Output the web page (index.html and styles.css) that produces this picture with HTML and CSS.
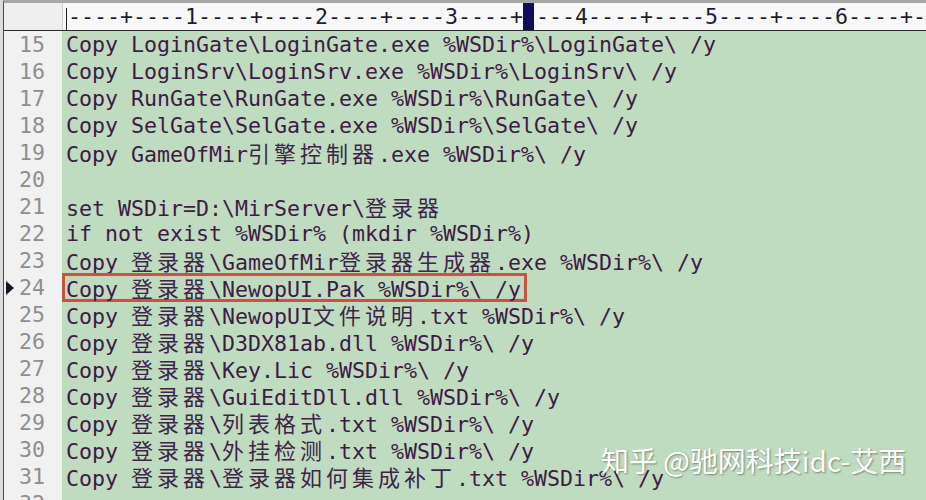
FILE: index.html
```html
<!DOCTYPE html>
<html>
<head>
<meta charset="utf-8">
<link rel="stylesheet" href="styles.css">
</head>
<body>
<div class="window">
  <div class="ruler-row">
    <div class="gutter-head"></div>
    <div class="ruler"><span class="tick"></span>----+----1----+----2----+----3----+<span class="caret">-</span>---4----+----5----+----6----+-</div>
  </div>
  <div class="editor">
    <div class="gutter">
      <div class="ln">15</div><div class="ln">16</div><div class="ln">17</div><div class="ln">18</div>
      <div class="ln">19</div><div class="ln">20</div><div class="ln">21</div><div class="ln">22</div>
      <div class="ln">23</div><div class="ln cur"><span class="mark"></span>24</div><div class="ln">25</div><div class="ln">26</div>
      <div class="ln">27</div><div class="ln">28</div><div class="ln">29</div><div class="ln">30</div>
      <div class="ln">31</div><div class="ln">32</div>
    </div>
    <div class="code">
      <div class="line">Copy LoginGate\LoginGate.exe %WSDir%\LoginGate\ /y</div>
      <div class="line">Copy LoginSrv\LoginSrv.exe %WSDir%\LoginSrv\ /y</div>
      <div class="line">Copy RunGate\RunGate.exe %WSDir%\RunGate\ /y</div>
      <div class="line">Copy SelGate\SelGate.exe %WSDir%\SelGate\ /y</div>
      <div class="line">Copy GameOfMir<span class="cjk">引擎控制器</span>.exe %WSDir%\ /y</div>
      <div class="line"></div>
      <div class="line">set WSDir=D:\MirServer\<span class="cjk">登录器</span></div>
      <div class="line">if not exist %WSDir% (mkdir %WSDir%)</div>
      <div class="line">Copy <span class="cjk">登录器</span>\GameOfMir<span class="cjk">登录器生成器</span>.exe %WSDir%\ /y</div>
      <div class="line"><span class="hl">Copy <span class="cjk">登录器</span>\NewopUI.Pak %WSDir%\ /y</span></div>
      <div class="line">Copy <span class="cjk">登录器</span>\NewopUI<span class="cjk">文件说明</span>.txt %WSDir%\ /y</div>
      <div class="line">Copy <span class="cjk">登录器</span>\D3DX81ab.dll %WSDir%\ /y</div>
      <div class="line">Copy <span class="cjk">登录器</span>\Key.Lic %WSDir%\ /y</div>
      <div class="line">Copy <span class="cjk">登录器</span>\GuiEditDll.dll %WSDir%\ /y</div>
      <div class="line">Copy <span class="cjk">登录器</span>\<span class="cjk">列表格式</span>.txt %WSDir%\ /y</div>
      <div class="line">Copy <span class="cjk">登录器</span>\<span class="cjk">外挂检测</span>.txt %WSDir%\ /y</div>
      <div class="line">Copy <span class="cjk">登录器</span>\<span class="cjk">登录器如何集成补丁</span>.txt %WSDir%\ /y</div>
      <div class="line"></div>
    </div>
  </div>
  <div class="watermark">知乎 @驰网科技idc-艾西</div>
</div>
</body>
</html>
```

FILE: styles.css
```css
html, body {
  margin: 0;
  padding: 0;
  width: 926px;
  height: 500px;
  overflow: hidden;
  background: #dcdcdc;
}

.window {
  position: relative;
  height: 497px;
  margin-left: 3px;
  border-top: 3px solid #a7a7a7;
  border-left: 1px solid #4a4a4a;
  overflow: hidden;
  font-family: "DejaVu Sans Mono", "Liberation Mono", monospace;
  font-size: 21.6px;
}

.ruler-row {
  display: flex;
  height: 27px;
  border-bottom: 1px solid #2a2a2a;
}

.gutter-head {
  width: 58px;
  background: #efefef;
  border-right: 1px solid #d0d0d0;
}

.ruler {
  flex: 1;
  position: relative;
  background: #f8f8f8;
  color: #1c1c2c;
  line-height: 27px;
  padding-left: 5px;
  white-space: pre;
  font-family: "DejaVu Sans Mono", monospace;
}

.tick {
  position: absolute;
  left: 3px;
  top: 5px;
  width: 1px;
  height: 22px;
  background: #222;
}

.caret {
  display: inline-block;
  width: 11px;
  background: #0e0e5c;
  color: #0e0e5c;
  margin-right: 2px;
}

.editor {
  display: flex;
}

.gutter {
  width: 58px;
  background: #f1f1f1;
  color: #8e8e8e;
  flex: none;
}

.ln {
  position: relative;
  height: 27px;
  line-height: 27px;
  text-align: right;
  padding-right: 17px;
}

.mark {
  position: absolute;
  left: 2px;
  top: 7px;
  width: 0;
  height: 0;
  border-top: 7px solid transparent;
  border-bottom: 7px solid transparent;
  border-left: 8px solid #151525;
}

.code {
  flex: 1;
  background: #c0dcc0;
  color: #3e1a45;
  padding-left: 4px;
}

.line {
  height: 27px;
  line-height: 27px;
  white-space: pre;
}

.cjk {
  font-family: "Noto Sans CJK SC", sans-serif;
  font-size: 22px;
  letter-spacing: 4px;
  color: #3e2448;
}

.hl {
  display: inline-block;
  vertical-align: top;
  height: 29px;
  margin-top: -1px;
  margin-left: -4px;
  padding-left: 1px;
  padding-right: 3px;
  border: 3px solid #c4553f;
  box-shadow: inset 0 0 2px #eab0a0;
  box-sizing: border-box;
  line-height: 23px;
}

.watermark {
  position: absolute;
  left: 597px;
  top: 437px;
  font-family: "Noto Sans CJK SC", sans-serif;
  font-size: 28px;
  color: #ffffff;
  text-shadow: 1px 1px 2px rgba(60, 60, 60, 0.55);
  white-space: pre;
}
```
